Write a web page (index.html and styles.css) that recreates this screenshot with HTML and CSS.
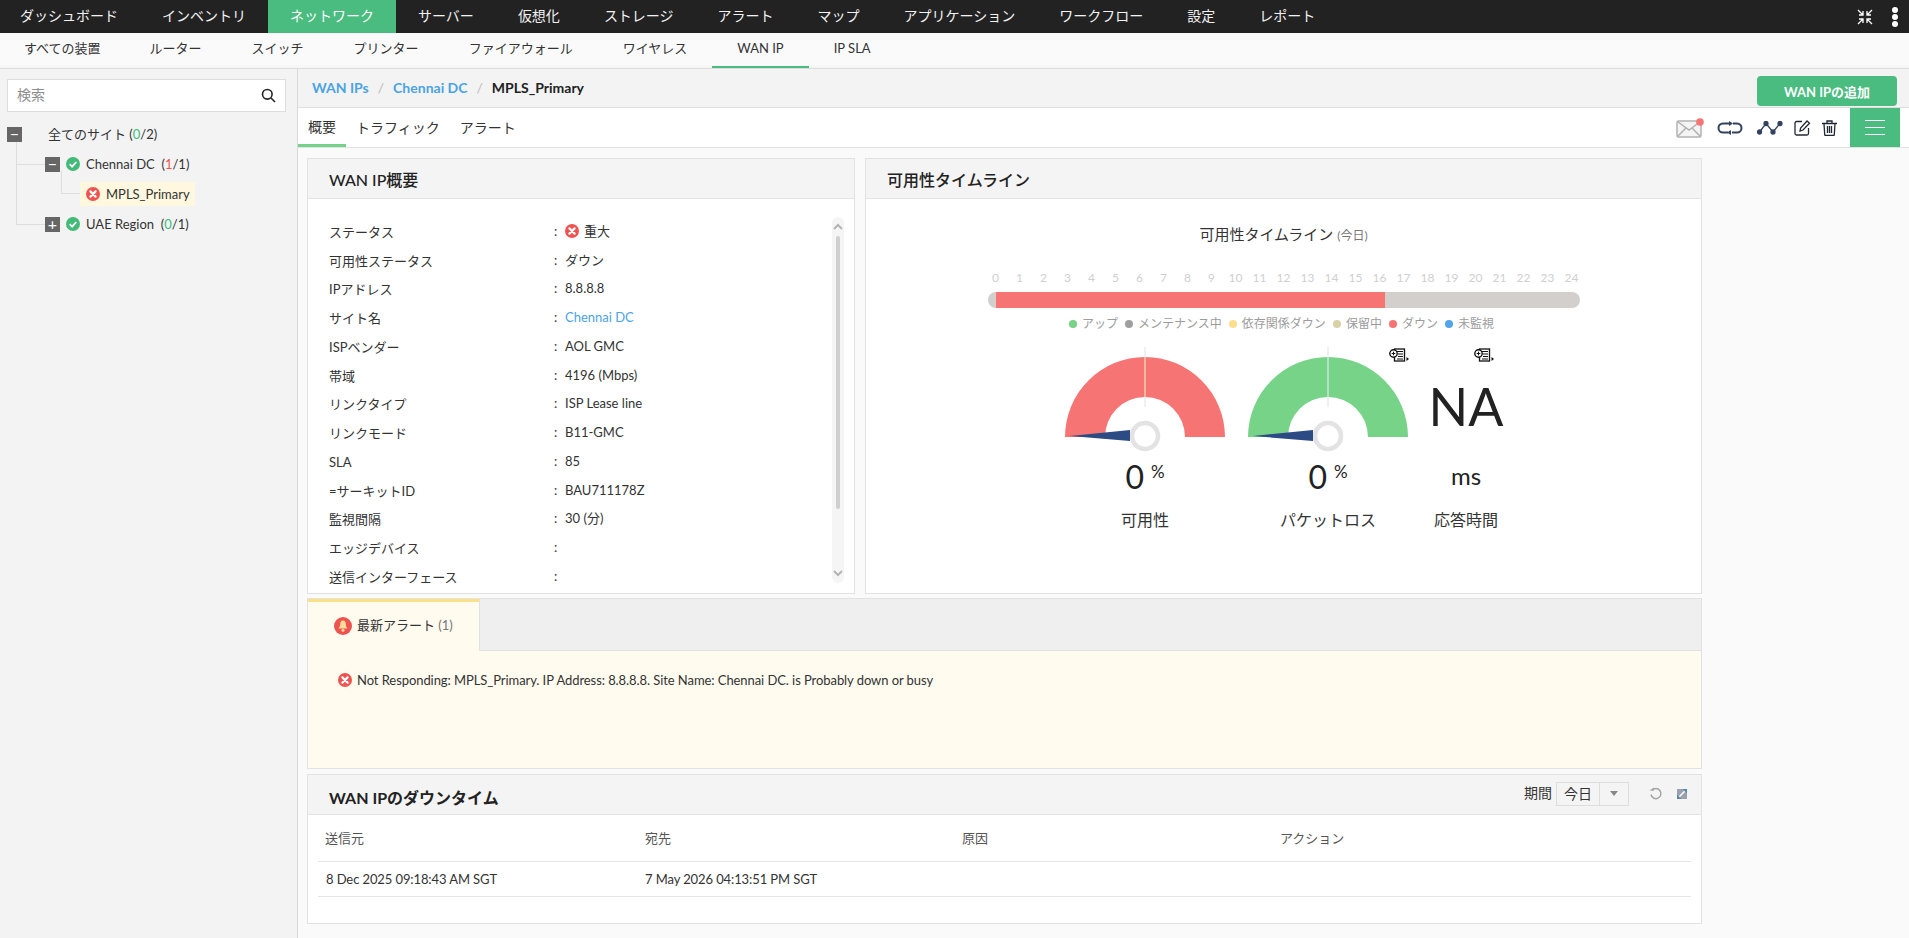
FILE: index.html
```html
<!DOCTYPE html>
<html lang="ja">
<head>
<meta charset="utf-8">
<title>WAN IP</title>
<link rel="stylesheet" href="styles.css">
</head>
<body>
<svg class="defs" width="0" height="0" aria-hidden="true">
  <symbol id="i-err" viewBox="0 0 14 14"><circle cx="7" cy="7" r="7" fill="#ef5350"/><path d="M4.4 4.4l5.2 5.2M9.6 4.4l-5.2 5.2" stroke="#fff" stroke-width="2.2" stroke-linecap="round"/></symbol>
  <symbol id="i-ok" viewBox="0 0 14 14"><circle cx="7" cy="7" r="7" fill="#43bb78"/><path d="M3.7 7.2l2.4 2.4 4.2-4.600" stroke="#fff" stroke-width="1.800" fill="none"/></symbol>
  <symbol id="i-detail" viewBox="0 0 20 14"><rect x="5.500" y="1" width="10" height="12" fill="#fff" stroke="#111" stroke-width="1.300"/><path d="M8 3.500h6M9 6h5M9 8.500h5M8 11h6" stroke="#111" stroke-width="1.200"/><circle cx="4.500" cy="5.500" r="3.700" fill="#fff" stroke="#111" stroke-width="1.400"/><path d="M2.700 5.500h3.600M4.500 3.700v3.600" stroke="#111"/><path d="M17.500 9l2.500 2-2.500 2z" fill="#111"/></symbol>
</svg>

<header class="topbar">
  <nav class="topnav">
    <a class="topitem">ダッシュボード</a>
    <a class="topitem">インベントリ</a>
    <a class="topitem is-active">ネットワーク</a>
    <a class="topitem">サーバー</a>
    <a class="topitem">仮想化</a>
    <a class="topitem">ストレージ</a>
    <a class="topitem">アラート</a>
    <a class="topitem">マップ</a>
    <a class="topitem">アプリケーション</a>
    <a class="topitem">ワークフロー</a>
    <a class="topitem">設定</a>
    <a class="topitem">レポート</a>
  </nav>
  <div class="topicons">
    <svg class="collapse" width="16" height="16" viewBox="0 0 16 16" fill="none" stroke="#fff" stroke-width="1.300">
      <path d="M1 1l5 5M6 2v4H2M15 1l-5 5M10 2v4h4M1 15l5-5M6 14v-4H2M15 15l-5-5M10 14v-4h4"/>
    </svg>
    <svg class="dots" width="6" height="20" viewBox="0 0 6 20" fill="#fff"><circle cx="3" cy="3" r="3"/><circle cx="3" cy="10" r="3"/><circle cx="3" cy="17" r="3"/></svg>
  </div>
</header>

<nav class="subnav">
  <a class="subitem">すべての装置</a>
  <a class="subitem">ルーター</a>
  <a class="subitem">スイッチ</a>
  <a class="subitem">プリンター</a>
  <a class="subitem">ファイアウォール</a>
  <a class="subitem">ワイヤレス</a>
  <a class="subitem is-active">WAN IP</a>
  <a class="subitem">IP SLA</a>
</nav>

<div class="shell">
  <aside class="sidebar">
    <div class="search">
      <span class="search-text">検索</span>
      <svg width="15" height="15" viewBox="0 0 15 15" fill="none" stroke="#222" stroke-width="1.600"><circle cx="6.300" cy="6.300" r="4.800"/><path d="M10 10l4 4"/></svg>
    </div>
    <div class="tree">
      <div class="tree-row root">
        <span class="tbox">&minus;</span>
        <span class="tlabel root-label">全てのサイト (<b class="g">0</b>/2)</span>
      </div>
      <div class="tree-row lvl1 l-chennai">
        <span class="tbox">&minus;</span>
        <svg class="ticon" width="14" height="14"><use href="#i-ok"/></svg>
        <span class="tlabel">Chennai DC &nbsp;(<b class="r">1</b>/1)</span>
      </div>
      <div class="tree-row lvl2">
        <div class="tree-sel">
          <svg class="ticon" width="14" height="14"><use href="#i-err"/></svg>
          <span class="tlabel">MPLS_Primary</span>
        </div>
      </div>
      <div class="tree-row lvl1 l-uae">
        <span class="tbox">+</span>
        <svg class="ticon" width="14" height="14"><use href="#i-ok"/></svg>
        <span class="tlabel">UAE Region &nbsp;(<b class="g">0</b>/1)</span>
      </div>
    </div>
  </aside>

  <main class="main">
    <div class="crumbbar">
      <div class="crumbs">
        <a class="crumb-link">WAN IPs</a><span class="crumb-sep">/</span>
        <a class="crumb-link">Chennai DC</a><span class="crumb-sep">/</span>
        <span class="crumb-cur">MPLS_Primary</span>
      </div>
      <button class="btn-add">WAN IPの追加</button>
    </div>

    <div class="tabbar">
      <div class="tabs">
        <a class="tab is-active">概要</a>
        <a class="tab">トラフィック</a>
        <a class="tab">アラート</a>
      </div>
      <div class="tools">
        <svg class="tool-mail" width="28" height="20" viewBox="0 0 28 20" fill="none" stroke="#b2b2b2" stroke-width="1.500">
          <rect x="1" y="3" width="24" height="16" rx="1.500" fill="#f4f4f4"/><path d="M1.500 3.500L13 12 24.500 3.500M1.500 18.500L10 10M24.500 18.500L16 10"/>
          <circle cx="24" cy="4" r="3.800" fill="#f67474" stroke="none"/>
        </svg>
        <svg class="tool tool-loop" width="28" height="14" viewBox="0 0 28 14" fill="none" stroke="#33415f" stroke-width="2">
          <path d="M14 2.500H7a4.500 4.500 0 0 0 0 9h5M16 11.500h5a4.500 4.500 0 0 0 0-9h-4"/><path d="M13 0l4 2.500-4 2.500zM15 9l-4 2.500 4 2.500z" fill="#33415f" stroke="none"/>
        </svg>
        <svg class="tool tool-graph" width="26" height="14" viewBox="0 0 26 14" fill="#33415f" stroke="#33415f" stroke-width="1.300">
          <path d="M2.500 11L9 2.500 16 11 23 2.500" fill="none"/><circle cx="2.500" cy="11" r="2"/><circle cx="9" cy="2.500" r="2"/><circle cx="16" cy="11" r="2"/><circle cx="23" cy="2.500" r="2"/>
        </svg>
        <svg class="tool tool-edit" width="17" height="16" viewBox="0 0 17 16" fill="none" stroke="#222733" stroke-width="1.300">
          <path d="M8 1.500H2.500a1.500 1.500 0 0 0-1.500 1.500v10.500A1.500 1.500 0 0 0 2.500 15H13a1.500 1.500 0 0 0 1.500-1.500V8"/><path d="M6 11l.6-3L13 1l2.500 2.200L9 10z"/>
        </svg>
        <svg class="tool tool-trash" width="15" height="16" viewBox="0 0 15 16" fill="none" stroke="#222733" stroke-width="1.300">
          <path d="M0 3.500h15M5 3.500V1h5v2.500M2 3.500l.7 11a1 1 0 0 0 1 1h7.600a1 1 0 0 0 1-1l.7-11M5.500 6v7M7.500 6v7M9.500 6v7"/>
        </svg>
        <button class="burger" aria-label="menu"><span></span><span></span><span></span></button>
      </div>
    </div>

    <div class="content">
      <div class="top-cards">
        <section class="card">
          <h2 class="card-head">WAN IP概要</h2>
          <div class="summary">
            <div class="summary-rows">
              <div class="kv"><span class="k">ステータス</span><span class="c">:</span><span class="v"><svg class="v-icon" width="14" height="14"><use href="#i-err"/></svg>重大</span></div>
              <div class="kv"><span class="k">可用性ステータス</span><span class="c">:</span><span class="v">ダウン</span></div>
              <div class="kv"><span class="k">IPアドレス</span><span class="c">:</span><span class="v">8.8.8.8</span></div>
              <div class="kv"><span class="k">サイト名</span><span class="c">:</span><span class="v link">Chennai DC</span></div>
              <div class="kv"><span class="k">ISPベンダー</span><span class="c">:</span><span class="v">AOL GMC</span></div>
              <div class="kv"><span class="k">帯域</span><span class="c">:</span><span class="v">4196 (Mbps)</span></div>
              <div class="kv"><span class="k">リンクタイプ</span><span class="c">:</span><span class="v">ISP Lease line</span></div>
              <div class="kv"><span class="k">リンクモード</span><span class="c">:</span><span class="v">B11-GMC</span></div>
              <div class="kv"><span class="k">SLA</span><span class="c">:</span><span class="v">85</span></div>
              <div class="kv"><span class="k">=サーキットID</span><span class="c">:</span><span class="v">BAU711178Z</span></div>
              <div class="kv"><span class="k">監視間隔</span><span class="c">:</span><span class="v">30 (分)</span></div>
              <div class="kv"><span class="k">エッジデバイス</span><span class="c">:</span><span class="v"></span></div>
              <div class="kv"><span class="k">送信インターフェース</span><span class="c">:</span><span class="v"></span></div>
            </div>
            <div class="scroll">
              <svg width="10" height="8" viewBox="0 0 10 8" fill="none" stroke="#b5b5b5" stroke-width="2"><path d="M1 6l4-4 4 4"/></svg>
              <div class="scroll-thumb"></div>
              <svg width="10" height="8" viewBox="0 0 10 8" fill="none" stroke="#b5b5b5" stroke-width="2"><path d="M1 2l4 4 4-4"/></svg>
            </div>
          </div>
        </section>

        <section class="card">
          <h2 class="card-head">可用性タイムライン</h2>
          <div class="timeline">
            <div class="tl-title">可用性タイムライン <small>(今日)</small></div>
            <div class="ticks">
              <span>0</span><span>1</span><span>2</span><span>3</span><span>4</span><span>5</span><span>6</span><span>7</span><span>8</span><span>9</span><span>10</span><span>11</span><span>12</span><span>13</span><span>14</span><span>15</span><span>16</span><span>17</span><span>18</span><span>19</span><span>20</span><span>21</span><span>22</span><span>23</span><span>24</span>
            </div>
            <div class="tl-bar"><div class="tl-down"></div></div>
            <div class="legend">
              <span class="lg"><i class="dot d-up"></i>アップ</span>
              <span class="lg"><i class="dot d-mt"></i>メンテナンス中</span>
              <span class="lg"><i class="dot d-dep"></i>依存関係ダウン</span>
              <span class="lg"><i class="dot d-hold"></i>保留中</span>
              <span class="lg"><i class="dot d-down"></i>ダウン</span>
              <span class="lg"><i class="dot d-none"></i>未監視</span>
            </div>
            <div class="gauges">
              <div class="gauge">
                <svg width="160" height="107" viewBox="0 0 160 107">
                  <path d="M0 90a80 80 0 0 1 160 0h-40a40 40 0 0 0-80 0z" fill="#f67474"/>
                  <path d="M80 0v60" stroke="#ececec" stroke-width="1.500"/><path d="M80 10v40" stroke="#e9a56d" stroke-width="1"/>
                  <circle cx="80" cy="89" r="13" fill="#fff" stroke="#e3e3e3" stroke-width="4.500"/>
                  <path d="M5 89l60-6v11z" fill="#2c4a84"/>
                </svg>
                <div class="g-val">0<sup>%</sup></div>
                <div class="g-name">可用性</div>
              </div>
              <div class="gauge">
                <svg width="160" height="107" viewBox="0 0 160 107">
                  <path d="M0 90a80 80 0 0 1 160 0h-40a40 40 0 0 0-80 0z" fill="#76d388"/>
                  <path d="M80 0v60" stroke="#ececec" stroke-width="1.500"/><path d="M80 10v40" stroke="#a3dcc0" stroke-width="1"/>
                  <circle cx="80" cy="89" r="13" fill="#fff" stroke="#e3e3e3" stroke-width="4.500"/>
                  <path d="M5 89l60-6v11z" fill="#2c4a84"/>
                </svg>
                <div class="g-val">0<sup>%</sup></div>
                <div class="g-name">パケットロス</div>
                <svg class="g-detail" width="20" height="14"><use href="#i-detail"/></svg>
              </div>
              <div class="gauge gauge-na">
                <div class="na">NA</div>
                <div class="ms">ms</div>
                <div class="g-name">応答時間</div>
                <svg class="g-detail na-detail" width="20" height="14"><use href="#i-detail"/></svg>
              </div>
            </div>
          </div>
        </section>
      </div>

      <section class="alerts">
        <div class="alert-tabs">
          <div class="alert-tab">
            <svg width="18" height="18" viewBox="0 0 18 18"><circle cx="9" cy="9" r="9" fill="#ef5350"/><path d="M9 3.500c-2 0-2.800 1.600-2.800 3.500 0 2.500-1 3.500-1.700 4.500h9c-.7-1-1.700-2-1.700-4.500 0-1.900-.8-3.500-2.800-3.500z" fill="#f9dc9a"/><circle cx="9" cy="13.300" r="1.500" fill="#f9dc9a"/></svg>
            <span>最新アラート <em>(1)</em></span>
          </div>
        </div>
        <div class="alert-body">
          <svg width="14" height="14"><use href="#i-err"/></svg>
          <span>Not Responding: MPLS_Primary. IP Address: 8.8.8.8. Site Name: Chennai DC. is Probably down or busy</span>
        </div>
      </section>

      <section class="card downtime">
        <div class="card-head dt-head">
          <h2 class="dt-title">WAN IPのダウンタイム</h2>
          <div class="dt-tools">
            <span class="dt-label">期間</span>
            <div class="select"><span class="select-val">今日</span><span class="select-arrow"></span></div>
            <svg class="dt-refresh" width="14" height="14" viewBox="0 0 14 14" fill="none" stroke="#a5a5a5" stroke-width="1.500"><path d="M3 3.500a5 5 0 1 1-1 4"/><path d="M0.500 3.500h4.500v-3z" fill="#a5a5a5" stroke="none"/></svg>
            <svg class="dt-expand" width="10" height="10" viewBox="0 0 10 10"><rect width="10" height="10" fill="#9aa3ad"/><path d="M0 10L10 0" stroke="#fff" stroke-width="1.500"/><path d="M5.500 0H10v4.500z" fill="#5d86a8"/><path d="M0 5.500V10h4.500z" fill="#5d86a8"/></svg>
          </div>
        </div>
        <div class="dt-table">
          <div class="dt-row dt-th"><span>送信元</span><span>宛先</span><span>原因</span><span>アクション</span></div>
          <div class="dt-row dt-td"><span>8 Dec 2025 09:18:43 AM SGT</span><span>7 May 2026 04:13:51 PM SGT</span><span></span><span></span></div>
        </div>
      </section>
    </div>
  </main>
</div>
</body>
</html>
```
FILE: styles.css
```css
* { box-sizing: border-box; }
html, body { margin: 0; height: 100%; }
body {
  height: 938px;
  overflow: hidden;
  display: flex;
  flex-direction: column;
  background: #fafafa;
  color: #333;
  font: 13px/1.3 Lato, "Noto Sans CJK JP", sans-serif;
}
a { color: inherit; text-decoration: none; }
h2 { margin: 0; font: inherit; }
.defs { position: absolute; }

/* top nav */
.topbar { height: 33px; flex: none; display: flex; justify-content: space-between; background: #222; color: #fff; }
.topnav { display: flex; }
.topitem { display: flex; align-items: center; padding: 0 22px; font-size: 14px; color: #f2f2f2; }
.topitem:first-child { padding-left: 20px; }
.topitem.is-active { background: #4abc7f; color: #fff; }
.topicons { display: flex; align-items: center; gap: 19px; padding-right: 11px; }
.collapse, .dots { display: block; }

/* sub nav */
.subnav { height: 36px; flex: none; display: flex; background: #fafafa; border-bottom: 1px solid #ddd; box-shadow: inset 0 -3px 3px -2px #f1f1f1; }
.subitem { display: flex; align-items: center; padding: 0 25px 2px; color: #333; border-bottom: 2px solid transparent; height: 35px; }
.subitem:first-child { padding-left: 24px; padding-right: 24px; }
.subitem.is-active { border-bottom-color: #4abc7f; }

.shell { flex: 1; display: flex; min-height: 0; }

/* sidebar */
.sidebar { width: 298px; flex: none; padding: 10px 11px 0 7px; background: #f3f3f3; border-right: 1px solid #d9d9d9; }
.search { height: 33px; display: flex; align-items: center; justify-content: space-between; padding: 0 9px; background: #fff; border: 1px solid #ddd; }
.search-text { color: #8d8d8d; font-size: 14px; }
.tree { margin-top: 7px; }
.tree-row { height: 30px; display: flex; align-items: center; position: relative; }
.tbox { width: 15px; height: 15px; display: flex; align-items: center; justify-content: center; background: #666; color: #fff; font-size: 16px; line-height: 1; position: relative; z-index: 1; }
.ticon { flex: none; }
.tlabel { color: #333; white-space: nowrap; }
.root-label { margin-left: 26px; }
.lvl1 { margin-left: 38px; }
.lvl1 .ticon { margin-left: 6px; }
.lvl1 .tlabel { margin-left: 6px; }
.lvl2 { margin-left: 73px; }
.tree-sel { height: 24px; width: 115px; display: flex; align-items: center; padding-left: 6px; background: #fff8de; }
.tree-sel .tlabel { margin-left: 6px; }
.g { font-weight: 400; color: #43bb78; }
.r { font-weight: 400; color: #ef5350; }
.lvl1::before { content: ""; position: absolute; left: -29px; top: 15px; width: 29px; border-top: 1px solid #ddd; }
.lvl2::before { content: ""; position: absolute; left: -19px; top: 14px; width: 19px; border-top: 1px solid #ddd; }
.lvl2::after { content: ""; position: absolute; left: -19px; top: -8px; height: 22px; border-left: 1px solid #ddd; }
.l-chennai::after, .l-uae::after { content: ""; position: absolute; left: -29px; border-left: 1px solid #ddd; }
.l-chennai::after { top: -8px; height: 38px; }
.l-uae::after { top: -30px; height: 45px; }

/* main */
.main { flex: 1; min-width: 0; }
.crumbbar { height: 39px; display: flex; align-items: center; justify-content: space-between; padding: 0 12px 0 14px; background: #f3f3f3; border-bottom: 1px solid #ddd; }
.crumbs { display: flex; align-items: center; font-size: 14px; }
.crumb-link { color: #4ba3e3; font-weight: 700; }
.crumb-sep { color: #bbb; margin: 0 9px; }
.crumb-cur { color: #222; font-weight: 700; }
.btn-add { width: 140px; height: 30px; margin-top: 6px; border: 0; border-radius: 4px; background: #4abc7f; color: #fff; font: 700 13px Lato, "Noto Sans CJK JP", sans-serif; }

.tabbar { height: 40px; display: flex; justify-content: space-between; background: #fff; border-bottom: 1px solid #e2e2e2; padding-right: 9px; }
.tabs { display: flex; }
.tab { display: flex; align-items: center; padding: 3px 10px 0; font-size: 14px; color: #333; border-bottom: 2px solid transparent; }
.tab.is-active { border-bottom: 3px solid #74d28a; }
.tools { display: flex; align-items: center; }
.tool { display: block; }
.tool-loop { margin-left: 12px; }
.tool-graph { margin-left: 13px; }
.tool-edit { margin-left: 11px; }
.tool-trash { margin-left: 11px; }
.burger { width: 50px; height: 39px; margin-left: 13px; display: flex; flex-direction: column; justify-content: center; gap: 6px; align-items: center; background: #4abc7f; border: 0; padding: 0; align-self: flex-start; }
.burger span { width: 20px; height: 1px; background: #fff; }

.content { padding: 10px 0 0 9px; width: 1404px; }
.top-cards { display: flex; gap: 10px; }
.card { background: #fff; border: 1px solid #e2e2e2; }
.top-cards .card { height: 436px; }
.top-cards .card:first-child { width: 548px; }
.top-cards .card:last-child { width: 837px; }
.card-head { height: 40px; display: flex; align-items: center; padding: 4px 0 0 21px; background: #f4f4f4; border-bottom: 1px solid #e2e2e2; font-size: 16px; font-weight: 500; color: #222; }

/* summary */
.summary { display: flex; height: 394px; }
.summary-rows { flex: 1; padding: 19px 0 0 21px; }
.kv { height: 28.75px; display: flex; align-items: center; }
.k { width: 225px; color: #333; }
.c, .v { padding-bottom: 2px; }
.c { width: 11px; }
.v { display: flex; align-items: center; color: #333; }
.v-icon { margin-right: 5px; }
.link { color: #4ba3e3; }
.scroll { width: 12px; height: 366px; margin: 18px 10px 0 0; display: flex; flex-direction: column; align-items: center; justify-content: space-between; padding: 6px 0; border-radius: 6px; background: #f5f5f5; }
.scroll-thumb { width: 4px; flex: 1; margin: 5px 0 60px; background: #cfcfcf; border-radius: 2px; }

/* timeline */
.timeline { display: flex; flex-direction: column; align-items: center; padding-top: 24px; height: 394px; }
.tl-title { font-size: 15px; color: #333; line-height: 22px; }
.tl-title small { font-size: 12px; color: #777; }
.ticks { display: flex; margin-top: 23px; line-height: 16px; height: 16px; }
.ticks span { width: 24px; text-align: center; font-size: 12px; color: #cfcfcf; }
.tl-bar { width: 592px; height: 16px; margin-top: 6px; padding-left: 8px; background: #d2cfcc; border-radius: 8px; }
.tl-down { width: 389px; height: 16px; background: #f67474; }
.legend { display: flex; gap: 7px; margin: 8px 0 0 -4px; font-size: 12px; line-height: 16px; color: #9c9c9c; }
.lg { display: flex; align-items: center; gap: 5px; }
.dot { width: 8px; height: 8px; border-radius: 50%; }
.d-up { background: #76d388; }
.d-mt { background: #9e9e9e; }
.d-dep { background: #fbdf8e; }
.d-hold { background: #d9d2a6; }
.d-down { background: #f67474; }
.d-none { background: #52a5e6; }
.gauges { display: flex; width: 459px; gap: 23px; margin-top: 15px; margin-left: 22px; }
.gauge { width: 160px; display: flex; flex-direction: column; align-items: center; position: relative; }
.gauge svg:first-child { display: block; }
.g-val { height: 46px; font-size: 32px; line-height: 46px; color: #222; }
.g-val sup { font-size: 17px; line-height: 0; margin-left: 7px; vertical-align: 11px; }
.g-name { margin-top: 8px; font-size: 16px; line-height: 24px; color: #333; }
.g-detail { position: absolute; right: -1px; top: 1px; }
.gauge-na { width: 116px; margin-left: -23px; }
.na { font-size: 52px; line-height: 56px; margin-top: 31px; color: #222; }
.ms { font-size: 24px; line-height: 30px; margin-top: 27px; color: #222; }
.gauge-na .g-name { margin-top: 17px; }
.na-detail { right: 30px; top: 1px; }

/* alerts */
.alerts { margin-top: 4px; width: 1395px; height: 171px; border: 1px solid #e2e2e2; background: #fffbee; }
.alert-tabs { height: 52px; background: #efefef; border-bottom: 1px solid #e2e2e2; }
.alert-tab { width: 172px; height: 52px; display: flex; align-items: center; gap: 5px; padding: 0 0 2px 26px; background: #fffbee; border-top: 3px solid #fbe08a; border-right: 1px solid #e2e2e2; color: #333; }
.alert-tab em { font-style: normal; color: #777; }
.alert-body { display: flex; align-items: center; gap: 5px; padding: 21px 0 0 30px; color: #333; line-height: 16px; letter-spacing: -0.07px; }

/* downtime */
.downtime { margin-top: 5px; width: 1395px; height: 150px; }
.dt-head { justify-content: space-between; padding: 0 9px 0 21px; }
.dt-title { font-size: 16px; font-weight: 700; margin-top: 7px; }
.dt-tools { display: flex; align-items: center; font-size: 14px; font-weight: 400; color: #333; margin-bottom: 2px; }
.dt-label { margin-right: 4px; }
.select { display: flex; width: 73px; height: 24px; border: 1px solid #ddd; }
.select-val { width: 43px; text-align: center; line-height: 22px; border-right: 1px solid #ddd; }
.select-arrow { flex: 1; display: flex; align-items: center; justify-content: center; }
.select-arrow::after { content: ""; border: 4px solid transparent; border-top: 5px solid #888; margin-top: 4px; }
.dt-refresh { margin-left: 20px; }
.dt-expand { margin-left: 14px; margin-right: 5px; }
.dt-table { margin: 0 10px; }
.dt-row { display: grid; grid-template-columns: 320px 317px 318px 1fr; align-items: center; border-bottom: 1px solid #e6e6e6; padding-left: 7px; }
.dt-th { height: 47px; color: #555; }
.dt-td { height: 35px; color: #333; padding-left: 8px; letter-spacing: -0.1px; grid-template-columns: 319px 317px 318px 1fr; }
```
